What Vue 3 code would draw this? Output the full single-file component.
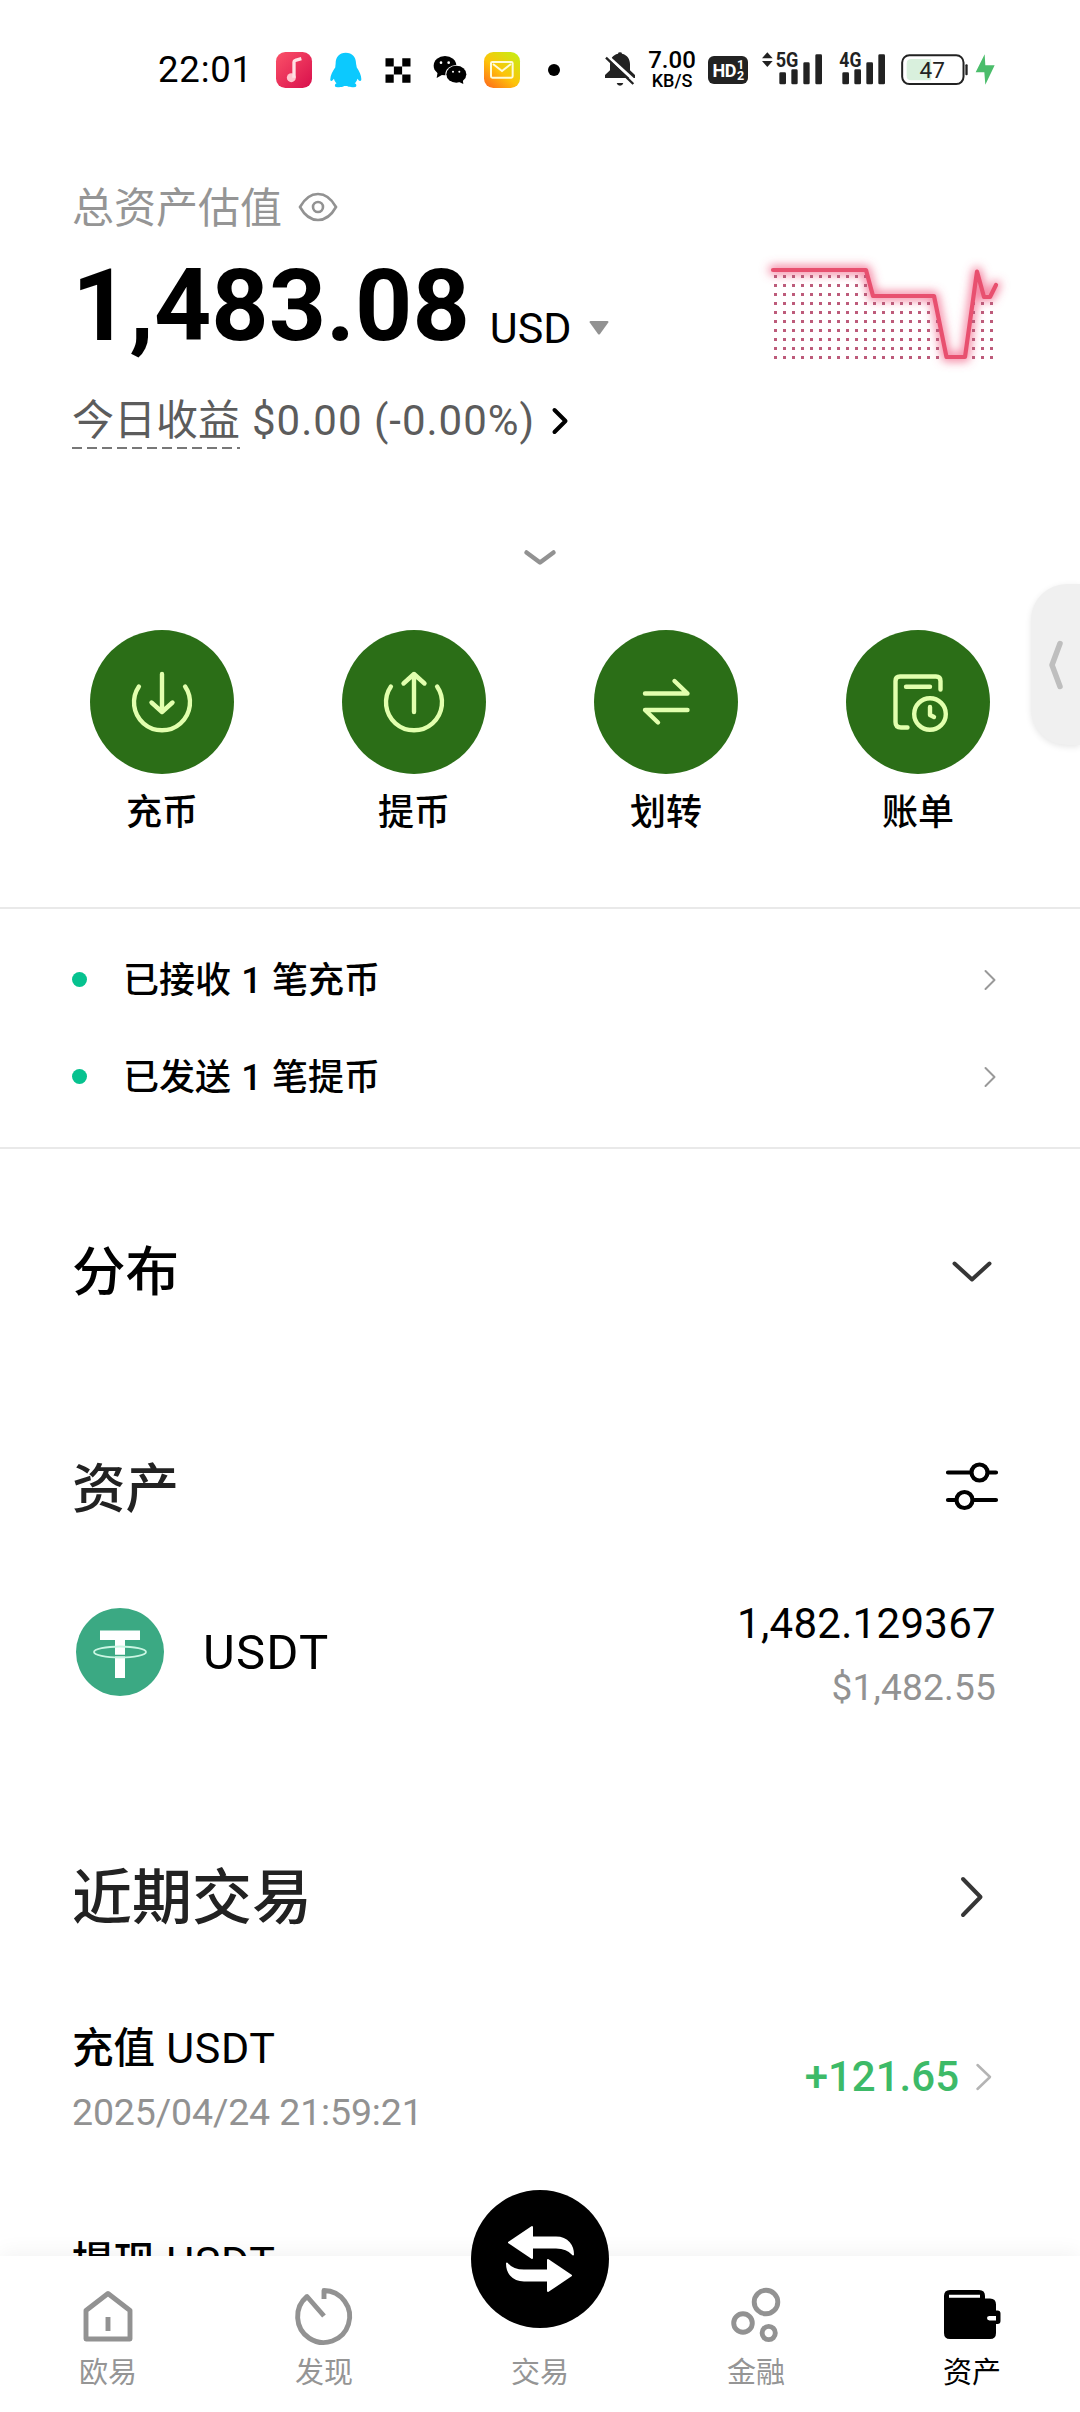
<script setup>
const trend = [
  [3, 20], [96, 20], [103, 46], [164, 46], [176.5, 107],
  [195, 107], [207, 21.5], [214, 47], [220, 47], [226, 35],
]
const trendLine = trend.map((p) => p.join(',')).join(' ')

function trendAt(x) {
  for (let i = 1; i < trend.length; i++) {
    const [x0, y0] = trend[i - 1]
    const [x1, y1] = trend[i]
    if (x <= x1) return y0 + ((y1 - y0) * (x - x0)) / (x1 - x0)
  }
  return trend[trend.length - 1][1]
}

const dots = []
for (let x = 5.5; x < 224; x += 9) {
  for (let y = 26.5; y < 110; y += 9) {
    if (y > trendAt(x) + 5) dots.push({ x, y })
  }
}

const actions = [
  { id: 'deposit', label: '充币' },
  { id: 'withdraw', label: '提币' },
  { id: 'transfer', label: '划转' },
  { id: 'bill', label: '账单' },
]
const notices = ['已接收 1 笔充币', '已发送 1 笔提币']
const tabs = [
  { id: 'home', label: '欧易' },
  { id: 'discover', label: '发现' },
  { id: 'trade', label: '交易' },
  { id: 'finance', label: '金融' },
  { id: 'assets', label: '资产' },
]
</script>

<template>
  <div class="screen">
    <div class="content">
      <header class="status">
        <span class="time">22:01</span>
        <svg class="s-music" viewBox="408 66 108 108">
          <defs>
            <linearGradient id="gm" x1="0" y1="0" x2="1" y2="1">
              <stop offset="0" stop-color="#fb5168" /><stop offset="1" stop-color="#d80f4c" />
            </linearGradient>
          </defs>
          <rect x="408" y="66" width="108" height="108" rx="28" fill="url(#gm)" />
          <circle cx="454" cy="143" r="13.5" fill="#ffc4cd" />
          <path d="M462 143V96q0-4 4-5l18-5" fill="none" stroke="#ffe1e4" stroke-width="10" />
        </svg>
        <svg class="s-qq" viewBox="570 66 96 108">
          <path d="M617 68c20 0 31 14 31 31 0 5 2 7 2 13 8 12 14 25 14 35 0 6-3 7-6 5-3-2-5-6-6-6-1 6-4 10-8 14 6 2 7 10 2 11-9 1-19 1-25-3h-8c-6 4-16 4-25 3-5-1-4-9 2-11-4-4-7-8-8-14-1 0-3 4-6 6s-6 0-5-5c0-10 7-23 15-35 0-6 1-8 1-13 0-17 11-31 30-31z" fill="#0cc9fe" />
        </svg>
        <svg class="s-okx" viewBox="735 82 78 76">
          <path d="M736 83h25v25h-25zM787 83h25v25h-25zM761.500 108h25v24h-25zM736 132h25v25h-25zM787 132h25v25h-25z" fill="#000" />
        </svg>
        <svg class="s-wechat" viewBox="876 66 108 108">
          <ellipse cx="915" cy="107" rx="34" ry="29" />
          <path d="M893 126l-3 18 17-10z" />
          <ellipse cx="949" cy="133" rx="33" ry="28" fill="#fff" />
          <ellipse cx="949" cy="133" rx="30" ry="25.500" />
          <path d="M956 155l14 7-2-15z" />
          <g fill="#fff"><circle cx="903" cy="98" r="4" /><circle cx="926" cy="98" r="4" /><circle cx="939" cy="125" r="3" /><circle cx="958" cy="125" r="3" /></g>
        </svg>
        <svg class="s-mail" viewBox="1032 66 108 108">
          <defs>
            <linearGradient id="ge" x1="0.100" y1="1" x2="0.900" y2="0">
              <stop offset="0" stop-color="#fd6d1b" /><stop offset="0.450" stop-color="#fec30a" /><stop offset="1" stop-color="#c5ee14" />
            </linearGradient>
          </defs>
          <rect x="1032" y="66" width="108" height="108" rx="28" fill="url(#ge)" />
          <rect x="1053" y="96" width="65" height="47" rx="4" fill="none" stroke="#fffbd8" stroke-width="6" />
          <path d="M1059 102l27 21 27-21" fill="none" stroke="#fffbd8" stroke-width="6" />
        </svg>
        <span class="s-more"></span>
        <svg class="s-bell" viewBox="72 62 96 116" fill="#222">
          <path d="M114 70q0-4 6-4t6 4c16 4 24 16 24 32v18l15 14v9H75v-9l15-14v-18c0-16 8-28 24-32z" />
          <path d="M110 158h20q-2 8-10 8t-10-8z" />
          <path d="M81 76l88 80" stroke="#fff" stroke-width="9" />
          <path d="M78 82l82 79" stroke="#222" stroke-width="7" />
        </svg>
        <span class="speed"><b>7.00</b><i>KB/S</i></span>
        <span class="hd"><span>HD</span><span class="sim"><i>1</i><i>2</i></span></span>
        <svg class="s-5g" viewBox="543 62 183 116" fill="#222">
          <path d="M546 84l16-18 16 18zM546 92l16 18 16-18z" />
          <text x="587" y="110" class="net" textLength="68" lengthAdjust="spacingAndGlyphs">5G</text>
          <rect x="598" y="126" width="20" height="36" rx="4" />
          <rect x="634" y="117" width="19" height="45" rx="4" />
          <rect x="670" y="96" width="19" height="66" rx="4" />
          <rect x="706" y="72" width="20" height="90" rx="4" />
        </svg>
        <svg class="s-4g" viewBox="774 62 141 116" fill="#222">
          <text x="778" y="110" class="net" textLength="66" lengthAdjust="spacingAndGlyphs">4G</text>
          <rect x="787" y="126" width="20" height="36" rx="4" />
          <rect x="823" y="117" width="20" height="45" rx="4" />
          <rect x="859" y="96" width="20" height="66" rx="4" />
          <rect x="895" y="72" width="20" height="90" rx="4" />
        </svg>
        <svg class="s-bat" viewBox="962 62 202 116">
          <rect x="965.500" y="74.500" width="185" height="87" rx="22" fill="#fff" stroke="#222" stroke-width="6" />
          <path d="M1053 86h-60q-14 0-14 14v36q0 14 14 14h60z" fill="#d9f0dd" />
          <rect x="1156" y="102" width="7" height="33" rx="3" fill="#222" />
          <text x="1056" y="143" text-anchor="middle" class="pct">47</text>
        </svg>
        <svg class="s-bolt" viewBox="1185 62 60 116">
          <path d="M1214 72l-27 54h26l3 37 28-58h-28z" fill="#4bbd6b" />
        </svg>
      </header>

      <section class="summary">
        <div class="figures">
          <div class="caption">
            <span>总资产估值</span>
            <svg class="eye" viewBox="0 0 40 30" fill="none" stroke="#929292" stroke-width="2.600">
              <path d="M2 15C7 6 13 2 20 2s13 4 18 13c-5 9-11 13-18 13S7 24 2 15z" />
              <circle cx="20" cy="15" r="5" />
            </svg>
          </div>
          <div class="total">
            <span class="amount">1,483.08</span>
            <span class="unit">USD</span>
            <svg class="caret" viewBox="0 0 20 14"><path d="M1.500 0h17q1.500 0 .8 1.500l-8.300 11.500q-1 1-2 0L.7 1.500Q0 0 1.500 0z" fill="#929292" /></svg>
          </div>
          <div class="today">
            <span class="today-label">今日收益</span>
            <span class="today-value">$0.00 (-0.00%)</span>
            <svg class="today-go" viewBox="0 0 16 28"><path d="M2.500 3l11 11-11 11" fill="none" stroke="#000" stroke-width="4" stroke-linecap="round" stroke-linejoin="round" /></svg>
          </div>
        </div>
        <svg class="trend" viewBox="-20 -10 270 140">
          <defs>
            <filter id="glow" x="-20%" y="-30%" width="140%" height="160%"><feGaussianBlur stdDeviation="5" /></filter>
          </defs>
          <g fill="none" stroke-linecap="round" stroke-linejoin="round">
            <polyline :points="trendLine" stroke="#f0577d" stroke-opacity="0.750" stroke-width="9" filter="url(#glow)" />
          </g>
          <rect v-for="(d, i) in dots" :key="i" :x="d.x - 1.500" :y="d.y - 1.500" width="3" height="3" fill="#bd5b7a" />
          <polyline :points="trendLine" fill="none" stroke="#e8506f" stroke-width="4.200" stroke-linecap="round" stroke-linejoin="round" />
        </svg>
      </section>

      <div class="expand">
        <svg viewBox="0 0 34 18"><path d="M3.500 3.500L17 13.500l13.500-10" fill="none" stroke="#929292" stroke-width="4.500" stroke-linecap="round" stroke-linejoin="round" /></svg>
      </div>

      <nav class="actions">
        <div v-for="a in actions" :key="a.id" class="action">
          <span class="disc">
            <svg viewBox="0 0 144 144" fill="none" stroke="#e2ffae" stroke-width="4.400" stroke-linecap="round" stroke-linejoin="round">
              <template v-if="a.id === 'deposit'">
                <path d="M48.900 56.500A28 28 0 1 0 95.100 56.500M72 44v38M61.500 72.500L72 82l10.500-9.500" />
              </template>
              <template v-else-if="a.id === 'withdraw'">
                <path d="M48.900 56.500A28 28 0 1 0 95.100 56.500M72 82V44M61.500 53.500L72 44l10.500 9.500" />
              </template>
              <template v-else-if="a.id === 'transfer'">
                <path d="M51 63.500h42.500L80.500 51M93.500 80H51l13 12.500" />
              </template>
              <template v-else>
                <path d="M94.500 59.500V51q0-4.500-4.500-4.500H54q-4.500 0-4.500 4.500v41q0 5.500 5.500 5.500h6.500M60 56.700h24" />
                <circle cx="84" cy="84" r="15.800" />
                <path d="M84 77v8l4 2" />
              </template>
            </svg>
          </span>
          <span class="action-label">{{ a.label }}</span>
        </div>
      </nav>

      <section class="notices">
        <div v-for="n in notices" :key="n" class="notice">
          <span class="bullet"></span>
          <span class="notice-text">{{ n }}</span>
          <svg viewBox="0 0 12 22"><path d="M1.500 2l9 9-9 9" fill="none" stroke="#999" stroke-width="2" stroke-linecap="round" stroke-linejoin="round" /></svg>
        </div>
      </section>

      <section class="row distribution">
        <h2>分布</h2>
        <svg class="down" viewBox="0 0 40 22"><path d="M2.500 2.500L20 18.500l17.500-16" fill="none" stroke="#363636" stroke-width="4" stroke-linecap="round" stroke-linejoin="round" /></svg>
      </section>

      <section class="row holdings">
        <h2>资产</h2>
        <svg class="tune" viewBox="0 0 54 50" fill="none" stroke="#000" stroke-width="4.200" stroke-linecap="round">
          <path d="M3 11.500h23M43 11.500h8M3 39h8M29 39h22" />
          <circle cx="34.500" cy="11.500" r="8" /><circle cx="19.500" cy="39" r="8" />
        </svg>
      </section>

      <section class="coin">
        <svg class="coin-logo" viewBox="0 0 88 88">
          <circle cx="44" cy="44" r="44" fill="#3ba983" />
          <path d="M24 22.500h40v9.500H49v38H39V32H24z" fill="#fff" />
          <ellipse cx="44" cy="44" rx="26" ry="5.500" fill="none" stroke="#c9f5e2" stroke-width="1.800" />
          <path d="M39 47.500h10" stroke="#3ba983" stroke-width="1.500" />
        </svg>
        <span class="coin-name">USDT</span>
        <span class="coin-values">
          <span class="qty">1,482.129367</span>
          <span class="worth">$1,482.55</span>
        </span>
      </section>

      <section class="row recent">
        <h2>近期交易</h2>
        <svg class="right" viewBox="0 0 24 42"><path d="M3 3l17.500 18L3 39" fill="none" stroke="#363636" stroke-width="4" stroke-linecap="round" stroke-linejoin="round" /></svg>
      </section>

      <section class="txn">
        <div class="txn-info">
          <span class="txn-title">充值 <em>USDT</em></span>
          <span class="txn-date">2025/04/24 21:59:21</span>
        </div>
        <span class="txn-amount">+121.65</span>
        <svg class="txn-go" viewBox="0 0 16 28"><path d="M1.500 2l12.500 12L1.500 26" fill="none" stroke="#b4b4b4" stroke-width="2.500" stroke-linecap="round" stroke-linejoin="round" /></svg>
      </section>
      <section class="txn next">
        <div class="txn-info"><span class="txn-title">提现 <em>USDT</em></span></div>
      </section>
    </div>

    <footer class="tabbar">
      <div v-for="t in tabs" :key="t.id" class="tab" :class="{ active: t.id === 'assets' }">
        <span v-if="t.id === 'trade'" class="trade">
          <svg viewBox="-69 -69 138 138" fill="#fff" stroke="#fff" stroke-width="2" stroke-linejoin="round">
            <path d="M-31 -16.500L-8 -32V-21.500H16C28 -21.500 33 -13 33 -4.500C29 -9.500 23 -11.500 16 -11.500H-8V-1z" />
            <path d="M31 16.500L8 32V21.500H-16C-28 21.500 -33 13 -33 4.500C-29 9.500 -23 11.500 -16 11.500H8V1z" />
          </svg>
        </span>
        <svg v-else class="tab-icon" viewBox="0 0 60 60" fill="none" stroke="#929292" stroke-width="4.900" stroke-linejoin="round" stroke-linecap="butt">
          <path v-if="t.id === 'home'" d="M8 25.500L30 8.500l22 17V54H8zM30 32v14" />
          <path v-else-if="t.id === 'discover'" d="M30 14V5.500A26 26 0 1 1 13 11.500L30 31" />
          <g v-else-if="t.id === 'finance'">
            <circle cx="40" cy="17" r="11.800" /><circle cx="17" cy="38" r="9.300" /><circle cx="42.700" cy="48" r="6.600" />
          </g>
          <g v-else stroke="none" fill="#000">
            <path d="M8 5h29q6 0 6 6v2.500h5q6 0 6 6v6h1.500q3 0 3 3v7.500q0 3-3 3H54v9q0 6-6 6H8q-6 0-6-6V11q0-6 6-6z" />
            <path d="M7 9.800h31v3H7zM54 31h-6.500q-2.500 0-2.500 2t2.500 2.500H54z" fill="#fff" />
          </g>
        </svg>
        <span class="tab-label">{{ t.label }}</span>
      </div>
    </footer>

    <aside class="handle">
      <svg viewBox="0 0 16 50"><path d="M13 3.500L5 25l8 21.500" fill="none" stroke="#bebebe" stroke-width="5.500" stroke-linecap="round" stroke-linejoin="round" /></svg>
    </aside>
  </div>
</template>

<style>
body { margin: 0; background: #fff; }
</style>

<style scoped>
.screen {
  position: relative;
  width: 1080px;
  height: 2412px;
  overflow: hidden;
  background: #fff;
  color: #000;
  font-family: Roboto, "Noto Sans CJK SC", sans-serif;
  display: flex;
  flex-direction: column;
}
svg { display: block; flex: none; overflow: visible; }
i, em { font-style: normal; }
h2 { margin: 0; font-weight: 500; }
.content { height: 2256px; overflow: hidden; flex: none; display: flex; flex-direction: column; }
.content > * { flex: none; }

.status { height: 140px; display: flex; align-items: center; padding-left: 158px; }
.status > * { flex: none; }
.time { width: 92px; font-size: 36.500px; line-height: 40px; letter-spacing: 0.800px; white-space: nowrap; }
.s-music { width: 36px; height: 36px; margin-left: 26px; }
.s-qq { width: 32px; height: 36px; margin-left: 18px; }
.s-okx { width: 26px; height: 25px; margin-left: 23px; }
.s-wechat { width: 36px; height: 36px; margin-left: 21px; }
.s-mail { width: 36px; height: 36px; margin-left: 16px; }
.s-more { width: 12px; height: 12px; border-radius: 50%; background: #000; margin-left: 28px; }
.s-bell { width: 32px; height: 38.700px; margin-left: 44px; }
.speed { width: 54px; margin-left: 9px; display: flex; flex-direction: column; align-items: center; white-space: nowrap; }
.speed b { font-size: 24px; line-height: 19px; font-weight: 500; }
.speed i { font-size: 18px; line-height: 19px; font-weight: 500; position: relative; top: 1px; }
.hd { width: 40px; height: 28px; margin-left: 9px; border-radius: 6px; background: #222; color: #fff; display: flex; align-items: center; justify-content: center; font-weight: 700; font-size: 18px; letter-spacing: -0.500px; }
.sim { display: flex; flex-direction: column; margin-left: 1px; font-size: 12.500px; line-height: 11.500px; }
.s-5g { width: 61px; height: 38.700px; margin-left: 13px; }
.s-4g { width: 47px; height: 38.700px; margin-left: 16px; }
.net { font-size: 58px; font-weight: 700; }
.s-bat { width: 67px; height: 38.700px; margin-left: 16px; }
.pct { font-size: 68px; fill: #222; }
.s-bolt { width: 20px; height: 38.700px; margin-left: 7px; }

.summary { height: 370px; padding: 0 62px 0 72px; display: flex; justify-content: space-between; }
.figures { display: flex; flex-direction: column; }
.caption { height: 50px; margin-top: 44px; display: flex; align-items: center; font-size: 42px; line-height: 50px; color: #959595; font-weight: 400; }
.eye { width: 40px; height: 30px; margin-left: 16px; margin-top: -5px; }
.total { height: 100px; margin-top: 22px; display: flex; align-items: baseline; }
.amount { font-size: 100px; line-height: 100px; font-weight: 700; letter-spacing: 0; }
.unit { font-size: 43px; line-height: 50px; margin-left: 20px; position: relative; top: 3px; }
.caret { width: 20px; height: 14px; margin-left: 17px; position: relative; top: -5px; }
.today { height: 56px; margin-top: 37px; display: flex; align-items: center; font-size: 42px; line-height: 56px; color: #5c5c5c; }
.today-label { height: 56px; font-weight: 400; background: repeating-linear-gradient(90deg, #777 0 10px, transparent 10px 15px) left bottom / 100% 2px no-repeat; }
.today-value { margin-left: 12px; white-space: nowrap; letter-spacing: 1px; }
.today-go { width: 16px; height: 28px; margin-left: 17px; }
.trend { width: 270px; height: 140px; margin-top: 100px; margin-right: -2px; }

.expand { height: 120px; display: flex; justify-content: center; }
.expand svg { width: 34px; height: 18px; margin-top: 39px; }

.actions { height: 277px; display: flex; justify-content: space-between; padding: 0 90px; }
.action { width: 144px; display: flex; flex-direction: column; align-items: center; }
.disc { width: 144px; height: 144px; border-radius: 50%; background: #2b6e17; }
.disc svg { width: 144px; height: 144px; }
.action-label { font-size: 36px; line-height: 44px; font-weight: 500; margin-top: 17px; }

.notices { height: 242px; box-sizing: border-box; border-top: 2px solid #e9e9e9; border-bottom: 2px solid #e9e9e9; padding: 22px 84px 0 72px; }
.notice { height: 97px; display: flex; align-items: center; }
.bullet { width: 15px; height: 15px; border-radius: 50%; background: #06c28f; }
.notice-text { flex: 1; margin-left: 36px; margin-top: 3px; font-size: 36px; line-height: 44px; font-weight: 500; word-spacing: 1.300px; }
.notice svg { width: 12px; height: 22px; }

.row { display: flex; align-items: center; justify-content: space-between; padding-left: 72px; }
.row h2 { font-size: 53.500px; line-height: 64px; }
.distribution { height: 64px; margin-top: 92px; padding-right: 88px; }
.down { width: 40px; height: 22px; margin-top: -3px; }
.holdings { height: 64px; margin-top: 153px; padding-right: 81px; color: #222; }
.tune { width: 54px; height: 50px; margin-top: -9px; }
.coin { height: 120px; margin-top: 71px; display: flex; align-items: center; padding: 0 84px 0 76px; }
.coin-logo { width: 88px; height: 88px; margin-top: -3px; }
.coin-name { font-size: 49px; line-height: 60px; margin-left: 39px; flex: 1; letter-spacing: 1.200px; }
.coin-values { display: flex; flex-direction: column; align-items: flex-end; }
.qty { font-size: 42px; line-height: 60px; letter-spacing: 0.300px; padding-top: 3px; }
.worth { font-size: 37px; line-height: 56px; color: #929292; padding-top: 6px; letter-spacing: 0.200px; }
.recent { height: 70px; margin-top: 152px; padding-right: 96px; color: #222; }
.row.recent h2 { font-size: 60px; line-height: 70px; margin-top: -2px; }
.right { width: 24px; height: 42px; margin-top: -6px; }

.txn { height: 130px; margin-top: 78px; padding: 0 88px 0 72px; display: flex; align-items: center; }
.txn-info { flex: 1; height: 130px; display: flex; flex-direction: column; }
.txn-title { font-size: 41.500px; line-height: 56px; height: 65px; padding-top: 7px; box-sizing: border-box; font-weight: 500; white-space: pre; }
.txn-title em { font-weight: 400; font-size: 43px; letter-spacing: 0.600px; margin-left: 1px; }
.txn-date { font-size: 37.500px; line-height: 50px; margin-top: 9px; color: #929292; white-space: pre; letter-spacing: -0.150px; }
.txn-amount { font-size: 42px; line-height: 56px; font-weight: 500; color: #3dba68; margin-top: -2px; }
.txn-go { width: 16px; height: 28px; margin-left: 17px; margin-top: -2px; }
.next { margin-top: 84px; }

.tabbar { height: 156px; flex: none; position: relative; display: flex; background: #fff; box-shadow: 0 -4px 20px rgba(0, 0, 0, 0.050); }
.tab { width: 216px; height: 156px; display: flex; flex-direction: column; align-items: center; color: #959595; }
.tab.active { color: #000; }
.tab-icon { width: 60px; height: 60px; margin-top: 29px; }
.trade { width: 138px; height: 138px; border-radius: 50%; background: #000; margin-top: -66px; margin-bottom: 17px; }
.trade svg { width: 138px; height: 138px; }
.tab-label { font-size: 29px; line-height: 36px; margin-top: 10px; font-weight: 400; }

.handle { position: absolute; right: 0; top: 584px; width: 49px; height: 161px; border-radius: 36px 0 0 36px; background: #f0f0f0; box-shadow: 0 2px 6px rgba(0, 0, 0, 0.100); display: flex; align-items: center; }
.handle svg { width: 16px; height: 50px; margin-left: 16px; }
</style>
